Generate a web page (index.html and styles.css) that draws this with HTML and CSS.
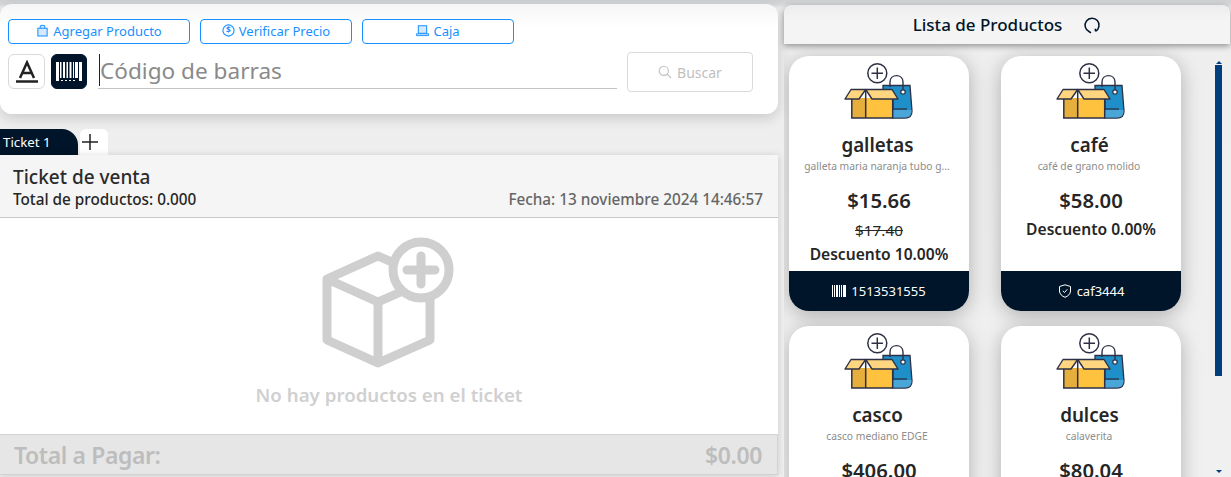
FILE: index.html
```html
<!DOCTYPE html>
<html lang="es">
<head>
<meta charset="utf-8">
<title>Punto de venta</title>
<link rel="stylesheet" href="styles.css">
</head>
<body>
<svg class="defs" width="0" height="0" aria-hidden="true">
  <defs>
    <symbol id="art" viewBox="0 0 90 70">
      <path d="M48 30.5H75L77 56Q77 63 70 63H58V45L48 36Z" fill="#1e8fc8" stroke="#2e3145" stroke-width="1.3"/>
      <path d="M58 55H76.5Q77 62.5 70 62.5H58Z" fill="#4ba6d8"/>
      <path d="M58 54H72" stroke="#2e3145" stroke-width="1.3"/>
      <path d="M55 32V27C55 18.500 68 18.500 68 27V35" fill="none" stroke="#2e3145" stroke-width="1.4"/>
      <circle cx="68" cy="37" r="2.200" fill="#fff" stroke="#2e3145" stroke-width="1.200"/>
      <circle cx="42.300" cy="18.300" r="9.500" fill="#fff" stroke="#2e3145" stroke-width="1.500"/>
      <path d="M36.500 18.300H48M42.300 12.500V24" stroke="#2e3145" stroke-width="1.500"/>
      <path d="M16.800 43H30.700V63H16.800Z" fill="#e5ae3d"/>
      <path d="M30.700 43H57.700V63H30.700Z" fill="#ffc23f"/>
      <path d="M16.800 43V63H57.700V43M30.700 36V63" fill="none" stroke="#2e3145" stroke-width="1.500"/>
      <path d="M10 44L16 34.500H30.700L24 44Z" fill="#ffd67f" stroke="#2e3145" stroke-width="1.400" stroke-linejoin="round"/>
      <path d="M30.700 34.500H57L63 44H37Z" fill="#ffd67f" stroke="#2e3145" stroke-width="1.400" stroke-linejoin="round"/>
    </symbol>
    <symbol id="bars" viewBox="0 0 14 12">
      <path d="M0 0H1V12H0ZM2 0H3V12H2ZM4 0H6V12H4ZM7 0H8V12H7ZM9 0H10V12H9ZM11 0H14V12H11Z" fill="currentColor"/>
    </symbol>
  </defs>
</svg>
<div class="app">
  <main class="left">
    <section class="top-card">
      <div class="actions">
        <button class="action action-wide">
          <svg class="action-icon" viewBox="0 0 14 14"><path d="M2 4.500H12V13H2ZM4.500 4.500V3C4.500 .7 9.500 .7 9.500 3V4.500" fill="#d4e9ff" stroke="currentColor" stroke-width="1.100"/></svg>
          Agregar Producto
        </button>
        <button class="action">
          <svg class="action-icon" viewBox="0 0 14 14"><circle cx="7" cy="7" r="6" fill="none" stroke="currentColor" stroke-width="1.200"/><text x="7" y="10" class="dollar">$</text></svg>
          Verificar Precio
        </button>
        <button class="action">
          <svg class="action-icon" viewBox="0 0 14 14"><path d="M2.500 2H11.500V10H2.500Z" fill="#d4e9ff" stroke="currentColor" stroke-width="1.100"/><path d="M.5 10.500H13.500V12.500H.5Z" fill="#d4e9ff" stroke="currentColor" stroke-width="1"/></svg>
          Caja
        </button>
      </div>
      <div class="search-row">
        <button class="mode mode-text" aria-label="Texto">
          <svg viewBox="0 0 24 24" width="24" height="24"><path d="M5 18L12 2.500L19 18M7.500 13H16.500" fill="none" stroke="#222" stroke-width="2.500"/><path d="M1 21.500H23" stroke="#222" stroke-width="2.500"/></svg>
        </button>
        <button class="mode mode-bar" aria-label="Código de barras">
          <svg viewBox="0 0 26 24" width="26" height="24"><path d="M0 2H3V21H0ZM4 2H5.500V18H4ZM7 2H9V18H7ZM10.500 2H12V18H10.500ZM13.500 2H15.500V18H13.500ZM17 2H18V18H17ZM19 2H22V18H19ZM23 2H26V21H23ZM5 20H7V21H5ZM9 20H11V21H9ZM13 20H15V21H13ZM17 20H19V21H17Z" fill="#fff"/></svg>
        </button>
        <div class="barcode-input"><span class="caret"></span>Código de barras</div>
        <button class="search-btn">
          <svg viewBox="0 0 14 14" width="14" height="14"><circle cx="5.800" cy="5.800" r="4.600" fill="none" stroke="currentColor" stroke-width="1.100"/><path d="M9.200 9.200L13 13" stroke="currentColor" stroke-width="1.100"/></svg>
          Buscar
        </button>
      </div>
    </section>

    <nav class="tabs">
      <div class="tab">Ticket 1</div>
      <div class="tab-add" aria-label="Nuevo ticket">
        <svg viewBox="0 0 18 18" width="18" height="18"><path d="M9 1V17M1 9H17" stroke="#222" stroke-width="1.500"/></svg>
      </div>
    </nav>

    <section class="ticket">
      <header class="ticket-head">
        <h1 class="ticket-title">Ticket de venta</h1>
        <div class="ticket-meta">
          <span class="ticket-count">Total de productos: 0.000</span>
          <span class="ticket-date">Fecha: 13 noviembre 2024 14:46:57</span>
        </div>
      </header>
      <div class="ticket-empty">
        <svg class="empty-icon" viewBox="0 0 140 140" width="140" height="140">
          <path d="M7 44L58 21L110 44V105L58 128L7 105ZM7 44L58 67L110 44M58 67V128" fill="none" stroke="#cfcfcf" stroke-width="9" stroke-linejoin="round"/>
          <circle cx="101" cy="35" r="28" fill="#fff" stroke="#cfcfcf" stroke-width="9"/>
          <path d="M101 21V49M87 35H115" stroke="#cfcfcf" stroke-width="9" stroke-linecap="round"/>
        </svg>
        <p class="empty-text">No hay productos en el ticket</p>
      </div>
      <footer class="ticket-total">
        <span class="total-text">Total a Pagar:</span>
        <span class="total-text">$0.00</span>
      </footer>
    </section>
  </main>

  <aside class="right">
    <header class="list-head">
      <h2 class="list-title">Lista de Productos</h2>
      <svg class="refresh" viewBox="0 0 18 18" width="18" height="18"><path d="M6 15.500A7 7 0 1 1 12.500 15.300M12.500 15.300L12.300 12.800M6 15.500L8 16.800" fill="none" stroke="#001529" stroke-width="1.500"/></svg>
    </header>
    <div class="list-body">
      <div class="grid">
        <article class="card">
          <svg class="art"><use href="#art"/></svg>
          <h3 class="name">galletas</h3>
          <p class="desc">galleta maria naranja tubo g...</p>
          <p class="price">$15.66</p>
          <p class="old">$17.40</p>
          <p class="disc">Descuento 10.00%</p>
          <div class="code"><svg class="code-icon"><use href="#bars"/></svg>1513531555</div>
        </article>
        <article class="card">
          <svg class="art"><use href="#art"/></svg>
          <h3 class="name">café</h3>
          <p class="desc">café de grano molido</p>
          <p class="price">$58.00</p>
          <p class="disc disc-first">Descuento 0.00%</p>
          <div class="code"><svg class="code-icon" viewBox="0 0 14 14"><path d="M7 .8L12.500 2.500V7C12.500 10 10 12.200 7 13.300C4 12.200 1.500 10 1.500 7V2.500Z M4.800 6.800L6.500 8.500L9.300 5.300" fill="none" stroke="currentColor" stroke-width="1"/></svg>caf3444</div>
        </article>
        <article class="card">
          <svg class="art"><use href="#art"/></svg>
          <h3 class="name">casco</h3>
          <p class="desc">casco mediano EDGE</p>
          <p class="price">$406.00</p>
        </article>
        <article class="card">
          <svg class="art"><use href="#art"/></svg>
          <h3 class="name">dulces</h3>
          <p class="desc">calaverita</p>
          <p class="price">$80.04</p>
        </article>
      </div>
      <div class="scrollbar">
        <span class="arrow arrow-up"></span>
        <span class="thumb"></span>
        <span class="arrow arrow-down"></span>
      </div>
    </div>
  </aside>
</div>
</body>
</html>
```
FILE: styles.css
```css
* { box-sizing: border-box; }
html, body { height: 477px; overflow: hidden; }
body {
  margin: 0;
  font-family: "Noto Sans", "Open Sans", sans-serif;
  color: #262626;
  background: linear-gradient(#cfd0d2 0, #d6d7d9 4px, #eee 8px, #f0f0f0 100%);
}
h1, h2, h3, p { margin: 0; }
button { font-family: inherit; cursor: pointer; }
.defs { position: absolute; }
.app { display: flex; height: 477px; padding-top: 4px; }

.left { width: 778px; flex: none; display: flex; flex-direction: column; }
.top-card {
  height: 110px;
  padding: 15px 25px 0 8px;
  border-radius: 12px;
  background: linear-gradient(#f6f6f6, #fff 24px);
  box-shadow: 0 4px 14px rgba(0,0,0,.16);
}
.actions { display: flex; gap: 10px; }
.action {
  width: 152px; height: 25px; padding: 0 0 2px;
  display: flex; align-items: center; justify-content: center; gap: 4px;
  background: #fff; color: #1890ff;
  border: 1px solid #1890ff; border-radius: 4px;
  font-size: 13px;
}
.action-wide { width: 182px; }
.action-icon { width: 13px; height: 13px; }
.dollar { font-size: 9px; font-weight: 700; fill: currentColor; text-anchor: middle; }
.search-row { display: flex; align-items: flex-start; margin-top: 8px; }
.mode {
  width: 37px; height: 35px; margin-top: 2px; padding: 0;
  display: flex; align-items: center; justify-content: center;
  background: #fff; border: 1px solid #d9d9d9; border-radius: 6px;
}
.mode-bar { width: 36px; margin-left: 6px; background: #001529; border-color: #001529; }
.barcode-input {
  width: 519px; height: 35px; margin: 2px 10px 0 11px; padding-left: 2px;
  border-bottom: 1px solid #c4c4c4;
  color: #8a8a8a; font-size: 22.600px; line-height: 34px;
  display: flex;
}
.caret { width: 1px; height: 32px; background: #222; margin: 0 0 0 -1px; }
.search-btn {
  width: 126px; height: 40px; padding: 0;
  display: flex; align-items: center; justify-content: center; gap: 5px;
  background: #fff; color: #bfbfbf;
  border: 1px solid #d9d9d9; border-radius: 4px;
  font-size: 14px;
}

.tabs { display: flex; gap: 2px; margin-top: 15px; height: 26px; }
.tab {
  width: 78px; height: 26px; padding-left: 3px;
  background: #001529; color: #fff;
  font-size: 13.300px; line-height: 27px;
  border-radius: 0 16px 0 0;
}
.tab-add {
  width: 28px; height: 26px; padding-left: 1px;
  display: flex; align-items: center;
  background: #fff; border-radius: 6px 6px 0 0;
}

.ticket { height: 320px; display: flex; flex-direction: column; background: #fff; box-shadow: 0 1px 8px rgba(0,0,0,.16); }
.ticket-head { height: 63px; padding: 10px 15px 0 13px; background: #f5f5f5; border-bottom: 1px solid #c8c8c8; }
.ticket-title { font-size: 19px; line-height: 24px; font-weight: 500; color: #2b2b2b; }
.ticket-meta { display: flex; justify-content: space-between; font-size: 15.300px; line-height: 20px; font-weight: 500; }
.ticket-date { color: #666; }
.ticket-empty { flex: 1; display: flex; flex-direction: column; align-items: center; padding-top: 17px; }
.empty-icon { display: block; margin-left: 2px; }
.empty-text { margin-top: 7px; font-size: 18.700px; line-height: 26px; font-weight: 600; color: #d0d0d0; }
.ticket-total {
  height: 41px; padding: 0 15px 0 14px;
  display: flex; justify-content: space-between; align-items: center;
  background: #e6e6e6; border: 1px solid #d2d2d2; border-left: 0;
}
.total-text { font-size: 23px; font-weight: 600; letter-spacing: -.4px; color: #bdbdbd; }

.right { flex: 1; min-width: 0; margin-left: 6px; display: flex; flex-direction: column; }
.list-head {
  height: 39px; margin: 1px 1px 0 0; gap: 21px;
  display: flex; align-items: center; justify-content: center;
  background: linear-gradient(#ececec, #f4f4f5 14px);
  border-radius: 8px 8px 0 0;
  box-shadow: 0 2px 6px rgba(0,0,0,.4);
}
.list-title { font-size: 17px; font-weight: 500; color: #001529; }
.refresh { flex: none; }
.list-body { flex: 1; min-height: 0; display: flex; padding: 12px 0 0 5px; overflow: hidden; }
.grid { width: 392px; display: grid; grid-template-columns: 180px 180px; column-gap: 32px; row-gap: 15px; align-content: start; }
.card {
  height: 255px; position: relative;
  display: flex; flex-direction: column; align-items: center;
  background: #fff; border-radius: 20px;
  box-shadow: 0 4px 20px rgba(0,0,0,.27);
  text-align: center;
}
.art { width: 90px; height: 70px; margin: -1px 0 0 2px; flex: none; }
.name { margin-top: 6px; padding-right: 3px; font-size: 18.800px; line-height: 28px; font-weight: 600; }
.desc { margin-top: 1px; padding-right: 4px; font-size: 10.300px; line-height: 12px; color: #8c8c8c; }
.price { margin-top: 14px; font-size: 20.300px; line-height: 28px; font-weight: 600; }
.old { margin-top: 6px; font-size: 15.300px; line-height: 20px; text-decoration: line-through; }
.disc { margin-top: 3px; font-size: 15.600px; line-height: 22px; font-weight: 600; }
.disc-first { margin-top: 4px; }
.code {
  position: absolute; left: 0; right: 0; bottom: 0; height: 40px;
  display: flex; align-items: center; justify-content: center; gap: 5px;
  background: #001529; color: #fff; font-size: 13px;
  border-radius: 0 0 20px 20px;
}
.code-icon { width: 14px; height: 14px; }
.scrollbar { width: 7px; height: 418px; margin: 5px 0 0 34px; display: flex; flex-direction: column; align-items: center; }
.thumb { width: 7px; height: 311px; margin: 1px 0 0; background: #003e7e; flex: none; }
.arrow { width: 0; height: 0; flex: none; border-left: 3px solid transparent; border-right: 3px solid transparent; }
.arrow-up { border-bottom: 3px solid #003e7e; margin-top: 0; }
.arrow-down { border-top: 3px solid #003e7e; margin-top: 94px; }
```
